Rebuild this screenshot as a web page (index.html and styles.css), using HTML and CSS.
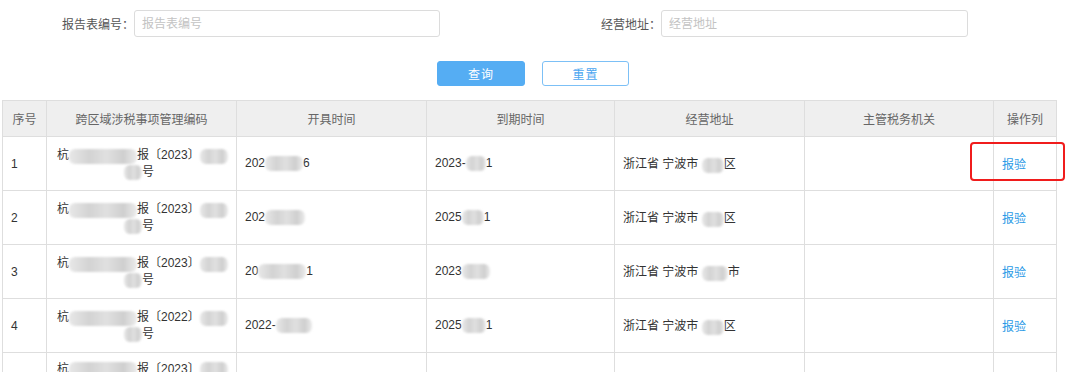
FILE: index.html
```html
<!DOCTYPE html>
<html lang="zh-CN">
<head>
  <meta charset="UTF-8">
  <title>跨区域涉税事项报验</title>
  <link rel="stylesheet" href="styles.css">
</head>
<body>
  <div class="search">
    <div class="field">
      <label class="field-label label-code">报告表编号：</label>
      <input class="field-input input-code" placeholder="报告表编号">
    </div>
    <div class="field">
      <label class="field-label label-addr">经营地址：</label>
      <input class="field-input input-addr" placeholder="经营地址">
    </div>
  </div>

  <div class="actions">
    <button class="btn btn-primary">查询</button>
    <button class="btn btn-plain">重置</button>
  </div>

  <table class="grid">
    <colgroup>
      <col style="width:44px">
      <col style="width:190px">
      <col style="width:190px">
      <col style="width:188px">
      <col style="width:190px">
      <col style="width:189px">
      <col style="width:63px">
    </colgroup>
    <thead>
      <tr>
        <th>序号</th>
        <th>跨区域涉税事项管理编码</th>
        <th>开具时间</th>
        <th>到期时间</th>
        <th>经营地址</th>
        <th>主管税务机关</th>
        <th>操作列</th>
      </tr>
    </thead>
    <tbody>
      <tr>
        <td>1</td>
        <td class="code">
          <div>杭<span class="mask" style="width:68px"></span>报〔2023〕<span class="mask" style="width:28px"></span></div>
          <div class="code-tail"><span class="mask" style="width:18px"></span>号</div>
        </td>
        <td>202<span class="mask" style="width:38px"></span>6</td>
        <td>2023-<span class="mask" style="width:20px"></span>1</td>
        <td>浙江省 宁波市 <span class="mask" style="width:22px"></span>区</td>
        <td></td>
        <td class="op"><a href="#">报验</a><span class="mark"></span></td>
      </tr>
      <tr>
        <td>2</td>
        <td class="code">
          <div>杭<span class="mask" style="width:68px"></span>报〔2023〕<span class="mask" style="width:28px"></span></div>
          <div class="code-tail"><span class="mask" style="width:18px"></span>号</div>
        </td>
        <td>202<span class="mask" style="width:40px"></span></td>
        <td>2025<span class="mask" style="width:22px"></span>1</td>
        <td>浙江省 宁波市 <span class="mask" style="width:22px"></span>区</td>
        <td></td>
        <td class="op"><a href="#">报验</a></td>
      </tr>
      <tr>
        <td>3</td>
        <td class="code">
          <div>杭<span class="mask" style="width:68px"></span>报〔2023〕<span class="mask" style="width:28px"></span></div>
          <div class="code-tail"><span class="mask" style="width:18px"></span>号</div>
        </td>
        <td>20<span class="mask" style="width:48px"></span>1</td>
        <td>2023<span class="mask" style="width:28px"></span></td>
        <td>浙江省 宁波市 <span class="mask" style="width:26px"></span>市</td>
        <td></td>
        <td class="op"><a href="#">报验</a></td>
      </tr>
      <tr>
        <td>4</td>
        <td class="code">
          <div>杭<span class="mask" style="width:68px"></span>报〔2022〕<span class="mask" style="width:28px"></span></div>
          <div class="code-tail"><span class="mask" style="width:18px"></span>号</div>
        </td>
        <td>2022-<span class="mask" style="width:36px"></span></td>
        <td>2025<span class="mask" style="width:24px"></span>1</td>
        <td>浙江省 宁波市 <span class="mask" style="width:22px"></span>区</td>
        <td></td>
        <td class="op"><a href="#">报验</a></td>
      </tr>
      <tr>
        <td></td>
        <td class="code code-top">
          <div>杭<span class="mask" style="width:68px"></span>报〔2023〕<span class="mask" style="width:28px"></span></div>
        </td>
        <td></td>
        <td></td>
        <td></td>
        <td></td>
        <td></td>
      </tr>
    </tbody>
  </table>
</body>
</html>
```

FILE: styles.css
```css
body { margin: 0; font-family: "Liberation Sans", "Noto Sans CJK SC", sans-serif; font-size: 12px; color: #333; background: #fff; }

.search { display: flex; padding-top: 10px; }
.field { display: flex; align-items: center; }
.field-label { text-align: right; color: #555; font-size: 12px; }
.label-code { width: 134px; }
.label-addr { width: 221px; }
.field-input { box-sizing: border-box; height: 27px; border: 1px solid #dcdcdc; border-radius: 3px; padding: 0 7px; font-family: inherit; font-size: 12px; color: #333; outline: none; }
.field-input::placeholder { color: #c3c3c3; }
.input-code { width: 306px; }
.input-addr { width: 307px; }

.actions { display: flex; gap: 17px; padding-left: 437px; margin-top: 24px; }
.btn { box-sizing: border-box; height: 25px; width: 88px; border-radius: 3px; font-family: inherit; font-size: 12px; letter-spacing: 1px; cursor: pointer; }
.btn-primary { background: #55adf3; border: 1px solid #55adf3; color: #fff; }
.btn-plain { width: 87px; background: #fff; border: 1px solid #7cc0f6; color: #4ba6f0; }

.grid { border-collapse: collapse; table-layout: fixed; width: 1055px; margin: 14px 0 0 2px; }
.grid th, .grid td { border: 1px solid #dedede; padding: 0 8px; }
.grid th { height: 35px; background: #efefef; color: #666; font-weight: normal; text-align: center; }
.grid td { height: 53px; text-align: left; vertical-align: middle; white-space: nowrap; }
.grid td.code { padding-left: 10px; line-height: 16px; }
.grid td.code-top { vertical-align: top; padding-top: 8px; }
.code-tail { padding-left: 67px; }
.grid td.op { position: relative; }
.op a { color: #2a9ae6; text-decoration: none; }

.mask { display: inline-block; height: 15px; vertical-align: middle; border-radius: 6px; background: linear-gradient(90deg, #e8e8e8, #d3d3d3 30%, #e0e0e0 55%, #cfcfcf 80%, #ececec); filter: blur(1.2px); }

.mark { position: absolute; left: -24px; top: 5px; width: 95px; height: 39px; box-sizing: border-box; border: 2px solid #f01c1c; border-radius: 4px; }
```
